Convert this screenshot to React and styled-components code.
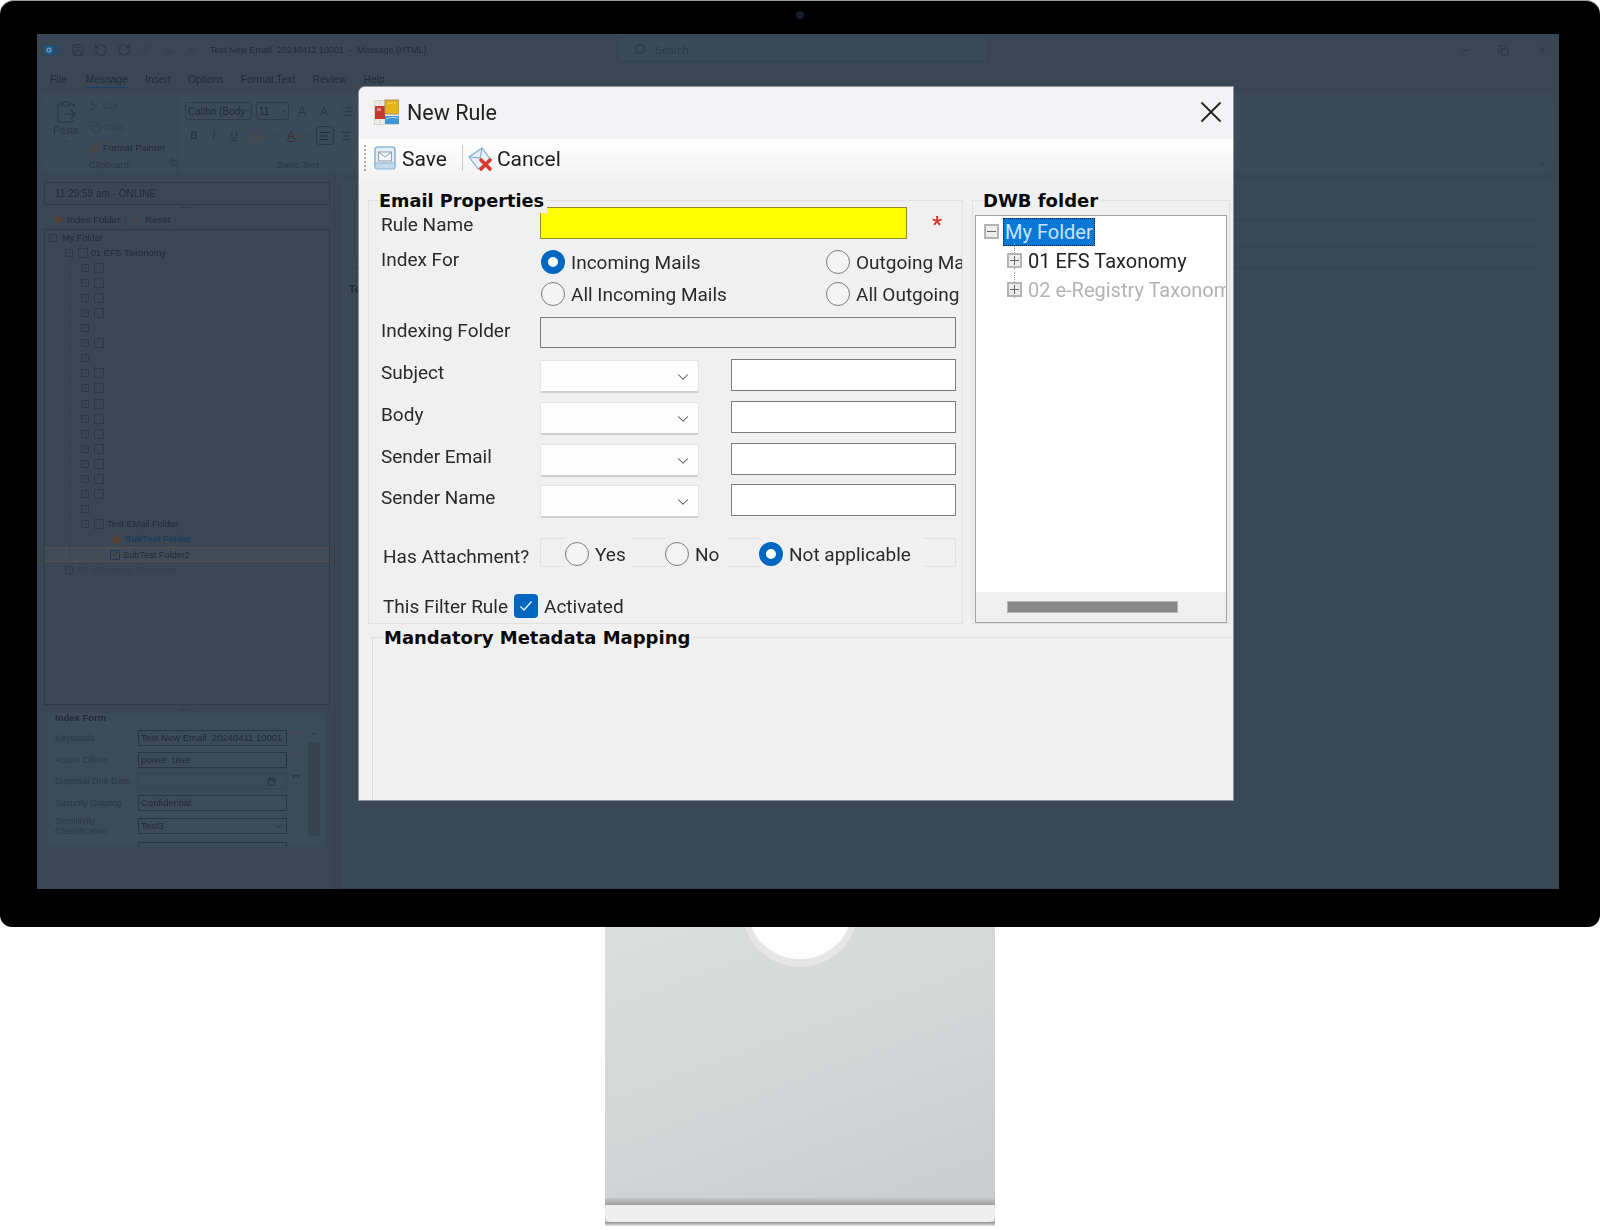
import React from "react";
import styled, { createGlobalStyle } from "styled-components";
import {
  AlignCenter,
  AlignLeft,
  ArrowDown,
  ArrowUp,
  Calendar,
  ChevronDown,
  ChevronUp,
  ClipboardPaste,
  Copy,
  Highlighter,
  List,
  Minus,
  Paintbrush,
  Reply,
  RotateCcw,
  RotateCw,
  Save,
  Scissors,
  Search,
  Star,
  X,
} from "lucide-react";

const GlobalStyle = createGlobalStyle`
  html, body { margin: 0; padding: 0; background: #fff; }
  * { box-sizing: border-box; }
  body { font-family: "Liberation Sans", Arial, sans-serif; }
`;

const DIM = "#202b37";
const DIM_SOFT = "#2a3643";
const DIM_LINE = "#2f3b49";

const Page = styled.div`
  width: 1600px;
  height: 1230px;
  display: flex;
  flex-direction: column;
  align-items: center;
`;

const Monitor = styled.div`
  width: 1600px;
  height: 927px;
  flex: none;
  position: relative;
  z-index: 1;
  background: #000;
  border-radius: 14px 14px 12px 12px;
  border-top: 1px solid #9a9a9a;
  padding: 33px 41px 38px 37px;
  display: flex;
`;

const Camera = styled.span`
  position: absolute;
  left: 796px;
  top: 10px;
  width: 8px;
  height: 8px;
  border-radius: 50%;
  background: #161d2b;
`;

const Screen = styled.div`
  flex: 1;
  position: relative;
  overflow: hidden;
  background: #394755;
`;

const AppLayer = styled.div`
  height: 100%;
  display: flex;
  flex-direction: column;
  color: ${DIM};
  font-size: 10.5px;
  filter: blur(0.3px);
`;

/* title bar of the dimmed mail window */
const TitleRow = styled.div`
  height: 32px;
  flex: none;
  display: grid;
  grid-template-columns: 580px 371px 1fr;
  align-items: center;
`;

const QuickBar = styled.div`
  display: flex;
  align-items: center;
  padding-left: 3px;
`;

const QuickIcon = styled.span`
  width: 23px;
  margin-left: ${(p) => p.$left || 0}px;
  display: flex;
  justify-content: center;
  color: ${(p) => p.$color || DIM_SOFT};
`;

const WindowTitle = styled.span`
  margin-left: 6px;
  white-space: pre;
  font-size: 9px;
`;

const SearchBox = styled.div`
  height: 25px;
  margin-top: -1px;
  border: 1px solid #35424f;
  border-radius: 4px;
  background: #3b4a58;
  display: flex;
  align-items: center;
  gap: 9px;
  padding-left: 15px;
  font-size: 10.5px;
  color: #2c3846;
`;

const WindowControls = styled.div`
  display: flex;
  justify-content: flex-end;
  align-items: center;
  gap: 27px;
  padding-right: 11px;
  color: ${DIM_SOFT};
`;

const TabRow = styled.div`
  height: 27px;
  flex: none;
  display: flex;
  align-items: center;
  gap: 17px;
  padding: 3px 0 0 13px;
  font-size: 10.4px;
`;

const Tab = styled.span`
  padding-bottom: 2px;
  margin-right: ${(p) => p.$after || 0}px;
  border-bottom: 1px solid ${(p) => (p.$active ? "#1d3f66" : "transparent")};
`;

const Ribbon = styled.div`
  height: 79px;
  flex: none;
  margin: 0 6px 0 4px;
  border-radius: 6px;
  background: #3b4a58;
  display: grid;
  grid-template-columns: 137px 1fr 24px;
`;

const RibbonGroup = styled.div`
  display: flex;
  flex-direction: column;
  border-right: ${(p) => (p.$divider ? `1px solid #34414f` : "none")};
`;

const RibbonBody = styled.div`
  flex: 1;
  display: flex;
`;

const RibbonFooter = styled.div`
  height: 17px;
  padding-bottom: 4px;
  padding-left: ${(p) => p.$indent || 0}px;
  display: flex;
  align-items: center;
  justify-content: ${(p) => (p.$indent ? "flex-start" : "center")};
  position: relative;
  font-size: 9.3px;
  color: #2b3744;
`;

const Launcher = styled.span`
  position: absolute;
  right: 0;
  top: 0;
  color: ${DIM_SOFT};
`;

const PasteColumn = styled.div`
  width: 44px;
  margin-left: 3px;
  padding-top: 7px;
  display: flex;
  flex-direction: column;
  align-items: center;
  font-size: 10px;
  gap: 1px;
  color: ${DIM_SOFT};
`;

const ClipStack = styled.div`
  padding: 2px 0 0 1px;
  display: flex;
  flex-direction: column;
  font-size: 9.4px;
`;

const ClipItem = styled.div`
  height: 21px;
  display: flex;
  align-items: center;
  gap: 2px;
  color: ${(p) => (p.$muted ? "#333f4d" : DIM)};
`;

const FontTools = styled.div`
  padding: 9px 0 0 7px;
  display: flex;
  flex-direction: column;
  gap: 6px;
`;

const ToolRow = styled.div`
  display: flex;
  align-items: center;
  height: ${(p) => p.$height || 18}px;
  gap: ${(p) => p.$gap || 4}px;
`;

const MiniSelect = styled.div`
  width: ${(p) => p.$width}px;
  height: 18px;
  border: 1px solid #2f3b49;
  border-radius: 3px;
  padding-left: 2px;
  display: flex;
  align-items: center;
  justify-content: space-between;
  font-size: 10px;
  overflow: hidden;
  white-space: nowrap;
`;

const ToolGlyph = styled.span`
  width: ${(p) => p.$width || 18}px;
  text-align: center;
  font-size: ${(p) => p.$size || 10}px;
  font-weight: ${(p) => p.$weight || 400};
  font-style: ${(p) => (p.$italic ? "italic" : "normal")};
  text-decoration: ${(p) => (p.$under ? "underline" : "none")};
  color: ${(p) => p.$color || DIM_SOFT};
  display: flex;
  justify-content: center;
`;

const AlignBox = styled.span`
  width: 18px;
  height: 19px;
  border: 1px solid #2b3643;
  border-radius: 4px;
  display: flex;
  align-items: center;
  justify-content: center;
  color: ${DIM};
`;

const RibbonCollapse = styled.div`
  display: flex;
  align-items: flex-end;
  justify-content: center;
  padding: 0 0 5px 0;
  color: ${DIM_SOFT};
`;

/* panes under the ribbon */
const Main = styled.div`
  flex: 1;
  display: flex;
  min-height: 0;
`;

const LeftPane = styled.div`
  width: 298px;
  flex: none;
  padding: 10px 4px 0 7px;
  border-right: 1px solid #34414f;
  display: flex;
  flex-direction: column;
`;

const StatusBox = styled.div`
  height: 23px;
  flex: none;
  border: 1px solid ${DIM_LINE};
  padding-left: 10px;
  display: flex;
  align-items: center;
  font-size: 10px;
`;

const Handle = styled.div`
  height: ${(p) => p.$height}px;
  flex: none;
  display: flex;
  justify-content: center;
  align-items: center;
  &::after {
    content: "";
    width: 14px;
    border-top: 1px dotted #2a3643;
  }
`;

const PaneToolbar = styled.div`
  height: 20px;
  flex: none;
  display: flex;
  align-items: center;
  padding-left: 10px;
  font-size: 9.6px;
`;

const PaneTool = styled.span`
  display: flex;
  align-items: center;
  gap: 4px;
  padding-right: 5px;
  margin-right: 4px;
  border-right: 1px solid #34414f;
  color: ${DIM};
`;

const TreeBox = styled.div`
  height: 476px;
  flex: none;
  border: 1px solid ${DIM_LINE};
  font-size: 9.2px;
  overflow: hidden;
`;

const DimRow = styled.div`
  height: 15.1px;
  position: relative;
  display: flex;
  align-items: center;
  gap: 3px;
  padding-left: ${(p) => p.$indent}px;
  color: ${(p) => p.$color || DIM};
  font-weight: ${(p) => (p.$bold ? 700 : 400)};
  white-space: nowrap;
  background: ${(p) => (p.$selected ? "#414d56" : "transparent")};
  border-top: ${(p) => (p.$selected ? "1px dotted #6a5040" : "none")};
  border-bottom: ${(p) => (p.$selected ? "1px dotted #6a5040" : "none")};
`;

const Guide = styled.span`
  position: absolute;
  left: ${(p) => p.$left}px;
  top: 0;
  bottom: 0;
  border-left: 1px dotted #303c4a;
`;

const DimExpander = styled.span`
  width: 8px;
  height: 8px;
  position: relative;
  flex: none;
  margin-right: 2px;
  border: 1px solid #2c3845;
  border-radius: 1px;
  background: #394755;
  display: flex;
  align-items: center;
  justify-content: center;
  font-size: 8px;
  line-height: 1;
  color: #2c3845;
`;

const DimCheck = styled.span`
  width: 10px;
  height: 10px;
  flex: none;
  position: relative;
  border: 1px solid ${(p) => (p.$on ? "#22375a" : "#2c3845")};
  border-radius: 1px;
  display: flex;
  align-items: center;
  justify-content: center;
  font-size: 8px;
`;

const IndexForm = styled.div`
  height: 134px;
  flex: none;
  margin: 0 5px 0 4px;
  background: #3c4b59;
  padding: 0 4px 0 7px;
  display: grid;
  grid-template-columns: 1fr 14px;
  overflow: hidden;
`;

const IndexRows = styled.div`
  display: flex;
  flex-direction: column;
  font-size: 9px;
`;

const IndexTitle = styled.div`
  height: 17px;
  line-height: 10px;
  font-weight: 700;
  font-size: 9.5px;
`;

const IndexRow = styled.div`
  display: grid;
  grid-template-columns: 83px 149px 1fr;
  align-items: center;
  min-height: 16px;
  margin-bottom: 5.5px;
  color: #2c3845;
  line-height: 10px;
`;

const IndexField = styled.div`
  height: 16px;
  border: 1px solid ${(p) => (p.$off ? "#37444f" : "#2a3643")};
  padding: 0 2px;
  display: flex;
  align-items: center;
  justify-content: space-between;
  white-space: pre;
  color: ${DIM};
  font-size: 9.5px;
`;

const IndexMark = styled.span`
  padding-left: 5px;
  margin-top: -4px;
  color: ${(p) => (p.$red ? "#5b4144" : "#222d3a")};
  font-size: 10px;
`;

const IndexScroll = styled.div`
  display: flex;
  flex-direction: column;
  align-items: center;
  justify-content: space-between;
  padding: 16px 0 5px;
  color: ${DIM};
`;

const IndexThumb = styled.div`
  flex: 1;
  align-self: stretch;
  margin: 3px 1px 12px;
  background: #35434f;
`;

const ReadingPane = styled.div`
  flex: 1;
  margin: 6px 6px 0 5px;
  padding: 19px 17px 0 13px;
  background: #3a4957;
  border: 1px solid #37444f;
  border-radius: 6px 6px 0 0;
`;

const InfoBox = styled.div`
  height: 61px;
  border-left: 1px solid #34414f;
  border-radius: 4px;
  margin-bottom: 9px;
`;

const InfoLine = styled.div`
  height: ${(p) => p.$height}px;
  border-bottom: 1px solid #34414f;
`;

const PaneRule = styled.div`
  border-top: 1px solid #34414f;
  padding: 14px 0 0 0;
  margin-left: -5px;
  font-size: 10.5px;
  font-weight: 700;
  color: #1f2a35;
`;

/* the dialog on top */
const Dialog = styled.div`
  position: absolute;
  left: 322px;
  top: 53px;
  width: 874px;
  height: 713px;
  background: #f0f0f0;
  border-radius: 6px 0 0 0;
  box-shadow: 0 0 0 1px #8c939a;
  display: flex;
  flex-direction: column;
  overflow: hidden;
  color: #1d1d1d;
  font-family: Roboto, "Liberation Sans", sans-serif;
`;

const DialogTitle = styled.div`
  height: 52px;
  flex: none;
  background: #f3f3f5;
  display: flex;
  align-items: center;
  padding: 0 4px 2px 15px;
  gap: 8px;
  font-size: 21.5px;
  color: #222;
`;

const CloseButton = styled.span`
  margin-left: auto;
  display: flex;
  color: #222;
`;

const Toolbar = styled.div`
  height: 46px;
  flex: none;
  background: linear-gradient(#ffffff, #f0f0f0);
  display: flex;
  align-items: flex-start;
  padding: 6px 0 0 5px;
  font-size: 21px;
`;

const Grip = styled.span`
  width: 2px;
  height: 26px;
  margin-right: 8px;
  border-left: 2px dotted #a9a9a9;
`;

const ToolButton = styled.span`
  display: flex;
  align-items: center;
  height: 27px;
  gap: ${(p) => p.$gap}px;
`;

const ToolSep = styled.span`
  width: 1px;
  height: 26px;
  margin: 0 5px 0 15px;
  background: #c9c9c9;
`;

const UpperRow = styled.div`
  height: 424px;
  flex: none;
  margin: 15px 0 0 9px;
  display: grid;
  grid-template-columns: 595px 258px;
  column-gap: 9px;
`;

const Group = styled.div`
  position: relative;
  border: 1px solid #e1e1e1;
  padding: ${(p) => p.$pad};
  display: flex;
  flex-direction: column;
`;

const GroupTitle = styled.span`
  position: absolute;
  left: ${(p) => p.$left}px;
  top: -12px;
  padding: 0 3px 0 0;
  line-height: 24px;
  font-family: "DejaVu Sans", sans-serif;
  font-size: ${(p) => p.$size || 18}px;
  font-weight: 700;
  color: #0a0a0a;
  background: #f0f0f0;
  white-space: nowrap;
  z-index: 1;
`;

const FormRow = styled.div`
  height: ${(p) => p.$height}px;
  flex: none;
  margin-top: ${(p) => p.$top}px;
  display: grid;
  grid-template-columns: 159px 1fr;
  position: relative;
`;

const FieldLabel = styled.span`
  font-size: 19px;
  line-height: 24px;
  margin-top: ${(p) => p.$top}px;
  margin-left: ${(p) => p.$indent || 0}px;
  white-space: nowrap;
  color: #2a2a2a;
`;

const RuleField = styled.div`
  display: flex;
  align-items: flex-start;
  gap: 25px;
`;

const YellowInput = styled.div`
  width: 367px;
  height: 32px;
  background: #ffff00;
  border: 1.5px solid #8d8d2c;
`;

const Required = styled.span`
  color: #d8352a;
  font-size: 22px;
  line-height: 36px;
  font-weight: 700;
`;

const RadioGrid = styled.div`
  display: grid;
  grid-template-columns: 285px 1fr;
  grid-auto-rows: 32px;
  overflow: hidden;
  padding-left: 1px;
  font-size: 19px;
`;

const RadioItem = styled.label`
  display: flex;
  align-items: center;
  gap: ${(p) => p.$gap || 6}px;
  white-space: nowrap;
  color: #2a2a2a;
`;

const RadioDot = styled.span`
  width: 24px;
  height: 24px;
  flex: none;
  border-radius: 50%;
  background: ${(p) => (p.$on ? "#fff" : "#f4f4f4")};
  border: ${(p) => (p.$on ? "7px solid #0067c0" : "1.5px solid #7b7b7b")};
`;

const SunkenField = styled.div`
  height: 100%;
  width: 416px;
  background: #f0f0f0;
  border: 1.5px solid #7c7c7c;
`;

const PairField = styled.div`
  display: flex;
  gap: 32px;
  align-items: flex-start;
`;

const Combo = styled.div`
  width: 159px;
  height: 33px;
  flex: none;
  background: #fdfdfd;
  border: 1px solid #e4e4e4;
  border-bottom: 2px solid #cfcfcf;
  border-radius: 2px;
  display: flex;
  align-items: center;
  justify-content: flex-end;
  padding: 2px 6px 0 0;
  color: #555;
`;

const PairInput = styled.div`
  width: 225px;
  height: 32px;
  background: #fff;
  border: 1.5px solid #7c7c7c;
  margin-top: -1px;
`;

const AttachGroup = styled.div`
  width: 416px;
  height: 29px;
  border: 1px solid #e1e1e1;
  display: flex;
  align-items: stretch;
  font-size: 19px;
`;

const AttachOption = styled.div`
  width: ${(p) => p.$width}px;
  margin: -1px 0 -1px ${(p) => p.$left}px;
  padding-top: 3px;
  background: #f0f0f0;
  display: flex;
  align-items: center;
`;

const FilterRow = styled.div`
  margin: 27px 0 0 2px;
  height: 24px;
  display: flex;
  align-items: center;
  font-size: 19px;
  color: #2a2a2a;
  white-space: nowrap;
`;

const CheckBox = styled.span`
  width: 24px;
  height: 24px;
  margin: 0 6px 0 6px;
  flex: none;
  border-radius: 4px;
  background: #0067c0;
  display: flex;
  align-items: center;
  justify-content: center;
`;

const FolderPanel = styled.div`
  flex: 1;
  background: #fff;
  border: 1.5px solid #a2a2a2;
  padding-top: 1px;
  display: flex;
  flex-direction: column;
  overflow: hidden;
  min-height: 0;
`;

const FolderRow = styled.div`
  height: 29px;
  flex: none;
  position: relative;
  display: flex;
  align-items: center;
  gap: ${(p) => (p.$level ? 6 : 4)}px;
  padding-left: ${(p) => (p.$level ? 31 : 8)}px;
  font-size: 20px;
  white-space: nowrap;
  color: ${(p) => (p.$muted ? "#b3b3b3" : "#222")};
`;

const FolderExpander = styled.span`
  width: 15px;
  height: 15px;
  flex: none;
  position: relative;
  background: #ededed;
  border: 2px solid #b4b4b4;
  &::before {
    content: "";
    position: absolute;
    left: 1px;
    right: 1px;
    top: 4.5px;
    border-top: 1px solid #666;
  }
  &::after {
    content: "";
    display: ${(p) => (p.$open ? "none" : "block")};
    position: absolute;
    top: 1px;
    bottom: 1px;
    left: 4.5px;
    border-left: 1px solid #666;
  }
`;

const SelectedName = styled.span`
  height: 28px;
  padding: 0 2px;
  display: flex;
  align-items: center;
  background: #0a78d7;
  color: #c4e4ff;
  outline: 1px dotted #123;
  outline-offset: -1px;
`;

const FolderLine = styled.span`
  position: absolute;
  left: 38px;
  top: -3px;
  bottom: 6px;
  border-left: 1px dotted #9a9a9a;
`;

const ScrollStrip = styled.div`
  height: 30px;
  flex: none;
  margin-top: auto;
  background: #f0f0f0;
  padding: 9px 0 9px 31px;
`;

const ScrollThumb = styled.div`
  width: 171px;
  height: 12px;
  background: #878787;
  border: 1px solid #b5b5b5;
`;

const MappingGroup = styled.div`
  flex: 1;
  position: relative;
  margin: 13px 0 0 13px;
  border-top: 1px solid #e1e1e1;
  border-left: 1px solid #dcdcdc;
`;

/* monitor stand */
const Stand = styled.div`
  width: 390px;
  height: 299px;
  flex: none;
  position: relative;
  overflow: hidden;
  display: flex;
  flex-direction: column;
  background: linear-gradient(160deg, #dcdddd 0%, #d3d4d5 55%, #c9cacb 100%);
`;

const StandCutout = styled.span`
  position: absolute;
  left: 137px;
  top: -76px;
  width: 116px;
  height: 116px;
  border-radius: 50%;
  background: #fff;
  border: 6px solid #e6e6e6;
  border-bottom-width: 8px;
`;

const StandFace = styled.div`
  flex: 1;
`;

const StandCrease = styled.div`
  height: 7px;
  background: linear-gradient(#c4c5c6, #9d9e9f);
`;

const StandFoot = styled.div`
  height: 17px;
  background: #eeeeee;
  border-radius: 0 0 6px 6px;
`;

const StandEdge = styled.div`
  height: 4px;
  background: linear-gradient(#8c8c8c, #e6e6e6);
`;

const TitleGlyph = () => (
  <svg width="25" height="26" viewBox="0 0 25 26">
    <rect x="0.5" y="1.5" width="24" height="24" fill="#ecebe6" stroke="#d5d5d0" />
    <path d="M1 9.5H11M1 19.5H11M6 1V25M11 1V25" stroke="#d2d2cc" fill="none" />
    <rect x="1" y="7" width="10" height="13" fill="#c5392e" />
    <rect x="3" y="9" width="4" height="3" fill="#e08f87" />
    <rect x="11" y="1" width="14" height="14" fill="#e5b516" stroke="#a9956a" />
    <path d="M14 5l2-2M17 5l2-2M20 5l2-2" stroke="#f7e77e" />
    <rect x="11" y="17" width="14" height="8" fill="#3f94d6" />
    <path d="M12 20c4-2 8-2 12-1" stroke="#a5d3f1" fill="none" />
  </svg>
);

const SaveGlyph = () => (
  <svg width="22" height="25" viewBox="0 0 22 25">
    <rect x="1" y="1" width="20" height="20" rx="3" fill="#e3edf5" stroke="#8db6d5" strokeWidth="1.6" />
    <rect x="1" y="17" width="20" height="6" rx="2" fill="#c3d9ea" stroke="#8db6d5" strokeWidth="1.2" />
    <rect x="4.5" y="6" width="13" height="9" fill="#f4f6f8" stroke="#8f9faa" />
    <path d="M4.5 6l6.5 5 6.5-5" stroke="#8f9faa" fill="none" />
  </svg>
);

const CancelGlyph = () => (
  <svg width="26" height="26" viewBox="0 0 26 26">
    <path d="M1 11L14 2l9 12-13 9z" fill="#e6f0f8" stroke="#7fa9c9" strokeWidth="1.2" />
    <path d="M1 11l11 1 2-10" stroke="#7fa9c9" fill="none" />
    <path d="M13 14l9 9M22 14l-9 9" stroke="#d83a2e" strokeWidth="3.6" strokeLinecap="round" />
  </svg>
);

const OutlookGlyph = () => (
  <svg width="14" height="14" viewBox="0 0 14 14">
    <rect x="3" y="1" width="11" height="12" rx="1" fill="#2a4a63" />
    <rect x="0" y="3" width="8" height="8" rx="1" fill="#1d5e8c" />
    <circle cx="4" cy="7" r="2" fill="none" stroke="#8fb0c8" />
  </svg>
);

const dimRows = [
  { check: true }, { check: true }, { check: true }, { check: true }, {},
  { check: true }, {}, { check: true }, { check: true }, { check: true },
  { check: true }, { check: true }, { check: true }, { check: true },
  { check: true }, { check: true }, {},
];

const indexRows = [
  { label: "Keywords", value: "Test New Email  20240411 10001", mark: "*", red: true },
  { label: "Action Officer", value: "power  user", mark: "*", red: true },
  { label: "Disposal Due Date", off: true, mark: "**" },
  { label: "Security Grading", value: "Confidential" },
  { label: "Sensitivity Classification", value: "Test3", select: true },
];

const pairRows = [
  { label: "Subject", top: 12 },
  { label: "Body", top: 9 },
  { label: "Sender Email", top: 9 },
  { label: "Sender Name", top: 8 },
];

const Background = () => (
  <AppLayer>
    <TitleRow>
      <QuickBar>
        <QuickIcon><OutlookGlyph /></QuickIcon>
        <QuickIcon $left={3}><Save size={14} /></QuickIcon>
        <QuickIcon><RotateCcw size={14} /></QuickIcon>
        <QuickIcon><RotateCw size={14} /></QuickIcon>
        <QuickIcon $color="#33404e"><ArrowUp size={13} /></QuickIcon>
        <QuickIcon $color="#33404e"><ArrowDown size={13} /></QuickIcon>
        <QuickIcon><ChevronDown size={11} /></QuickIcon>
        <WindowTitle>Test New Email  20240411 10001  -  Message (HTML)</WindowTitle>
      </QuickBar>
      <SearchBox>
        <Search size={13} style={{ transform: "scaleX(-1)" }} />
        Search
      </SearchBox>
      <WindowControls>
        <Minus size={11} />
        <Copy size={11} />
        <X size={12} />
      </WindowControls>
    </TitleRow>

    <TabRow>
      <Tab $after={2}>File</Tab>
      <Tab $active>Message</Tab>
      <Tab>Insert</Tab>
      <Tab>Options</Tab>
      <Tab>Format Text</Tab>
      <Tab>Review</Tab>
      <Tab>Help</Tab>
    </TabRow>

    <Ribbon>
      <RibbonGroup $divider>
        <RibbonBody>
          <PasteColumn>
            <ClipboardPaste size={24} strokeWidth={1.2} />
            Paste
            <ChevronDown size={9} />
          </PasteColumn>
          <ClipStack>
            <ClipItem $muted><Scissors size={12} /> Cut</ClipItem>
            <ClipItem $muted><Copy size={12} /> Copy</ClipItem>
            <ClipItem><Paintbrush size={12} color="#5a4438" /> Format Painter</ClipItem>
          </ClipStack>
        </RibbonBody>
        <RibbonFooter>
          Clipboard
          <Launcher><Copy size={8} /></Launcher>
        </RibbonFooter>
      </RibbonGroup>
      <RibbonGroup>
        <RibbonBody>
          <FontTools>
            <ToolRow>
              <MiniSelect $width={67}>Calibri (Body <ChevronDown size={8} /></MiniSelect>
              <MiniSelect $width={33}>11 <ChevronDown size={8} /></MiniSelect>
              <ToolGlyph $size={13} $width={18}>A</ToolGlyph>
              <ToolGlyph $size={11} $width={18}>A</ToolGlyph>
              <ToolGlyph $width={20}><List size={13} /></ToolGlyph>
            </ToolRow>
            <ToolRow $height={19} $gap={2}>
              <ToolGlyph $weight={700}>B</ToolGlyph>
              <ToolGlyph $italic>I</ToolGlyph>
              <ToolGlyph $under>U</ToolGlyph>
              <ToolGlyph $width={23} $color="#4a4a4a"><Highlighter size={13} /></ToolGlyph>
              <ToolGlyph $width={10}><ChevronDown size={8} /></ToolGlyph>
              <ToolGlyph $size={12} $under $color="#3a2f33">A</ToolGlyph>
              <ToolGlyph $width={12}><ChevronDown size={8} /></ToolGlyph>
              <AlignBox><AlignLeft size={12} /></AlignBox>
              <ToolGlyph $width={20}><AlignCenter size={12} /></ToolGlyph>
            </ToolRow>
          </FontTools>
        </RibbonBody>
        <RibbonFooter $indent={99}>Basic Text</RibbonFooter>
      </RibbonGroup>
      <RibbonCollapse><ChevronDown size={12} /></RibbonCollapse>
    </Ribbon>

    <Main>
      <LeftPane>
        <StatusBox>11:29:59 am - ONLINE</StatusBox>
        <Handle $height={4} />
        <PaneToolbar>
          <PaneTool><Star size={9} fill="#5b4034" color="#5b4034" /> Index Folder</PaneTool>
          <PaneTool><Reply size={11} color="#5b4034" /> Reset</PaneTool>
        </PaneToolbar>
        <TreeBox>
          <DimRow $indent={4}><DimExpander>−</DimExpander> My Folder</DimRow>
          <DimRow $indent={20}><DimExpander>−</DimExpander><DimCheck /> 01 EFS Taxonomy</DimRow>
          {dimRows.map((row, i) => (
            <DimRow key={i} $indent={36}>
              <Guide $left={24} />
              <DimExpander>+</DimExpander>
              {row.check && <DimCheck />}
            </DimRow>
          ))}
          <DimRow $indent={36}>
            <Guide $left={24} />
            <DimExpander>−</DimExpander><DimCheck /> Test EMail Folder
          </DimRow>
          <DimRow $indent={66} $bold $color="#1e3a5c">
            <Guide $left={24} />
            <Star size={11} fill="#5b4034" color="#5b4034" /> SubTest Folder
          </DimRow>
          <DimRow $indent={65} $selected>
            <Guide $left={24} />
            <DimCheck $on>✓</DimCheck> SubTest Folder2
          </DimRow>
          <DimRow $indent={20} $color="#33404e">
            <DimExpander>+</DimExpander> 02 e-Registry Taxonomy
          </DimRow>
        </TreeBox>
        <Handle $height={8} />
        <IndexForm>
          <IndexRows>
            <IndexTitle>Index Form</IndexTitle>
            {indexRows.map((row) => (
              <IndexRow key={row.label}>
                <span>{row.label}</span>
                <IndexField $off={row.off}>
                  {row.value}
                  {row.select && <ChevronDown size={9} />}
                  {row.off && <Calendar size={9} style={{ marginLeft: "auto", marginRight: 8 }} />}
                </IndexField>
                {row.mark && <IndexMark $red={row.red}>{row.mark}</IndexMark>}
              </IndexRow>
            ))}
            <IndexRow><span /><IndexField /></IndexRow>
          </IndexRows>
          <IndexScroll>
            <ChevronUp size={10} />
            <IndexThumb />
            <ChevronDown size={10} />
          </IndexScroll>
        </IndexForm>
      </LeftPane>
      <ReadingPane>
        <InfoBox>
          <InfoLine $height={23} />
          <InfoLine $height={26} />
        </InfoBox>
        <PaneRule>Te</PaneRule>
      </ReadingPane>
    </Main>
  </AppLayer>
);

const NewRuleDialog = () => (
  <Dialog>
    <DialogTitle>
      <TitleGlyph />
      New Rule
      <CloseButton><X size={36} strokeWidth={1.2} /></CloseButton>
    </DialogTitle>

    <Toolbar>
      <Grip />
      <ToolButton $gap={6}><SaveGlyph /> Save</ToolButton>
      <ToolSep />
      <ToolButton $gap={3}><CancelGlyph /> Cancel</ToolButton>
    </Toolbar>

    <UpperRow>
      <Group $pad="6px 0 0 12px">
        <GroupTitle $left={10} $size={17.7}>Email Properties</GroupTitle>

        <FormRow $height={32} $top={0}>
          <FieldLabel $top={6}>Rule Name</FieldLabel>
          <RuleField>
            <YellowInput />
            <Required>*</Required>
          </RuleField>
        </FormRow>

        <FormRow $height={56} $top={11}>
          <FieldLabel $top={-2}>Index For</FieldLabel>
          <RadioGrid style={{ marginTop: -4 }}>
            <RadioItem><RadioDot $on /> Incoming Mails</RadioItem>
            <RadioItem><RadioDot /> Outgoing Mails</RadioItem>
            <RadioItem><RadioDot /> All Incoming Mails</RadioItem>
            <RadioItem><RadioDot /> All Outgoing Mails</RadioItem>
          </RadioGrid>
        </FormRow>

        <FormRow $height={31} $top={11}>
          <FieldLabel $top={2}>Indexing Folder</FieldLabel>
          <SunkenField />
        </FormRow>

        {pairRows.map((row) => (
          <FormRow key={row.label} $height={33} $top={row.top}>
            <FieldLabel $top={1}>{row.label}</FieldLabel>
            <PairField>
              <Combo><ChevronDown size={18} strokeWidth={1.4} /></Combo>
              <PairInput />
            </PairField>
          </FormRow>
        ))}

        <FormRow $height={29} $top={20}>
          <FieldLabel $top={7} $indent={2}>Has Attachment?</FieldLabel>
          <AttachGroup>
            <AttachOption $left={24} $width={68}><RadioItem><RadioDot /> Yes</RadioItem></AttachOption>
            <AttachOption $left={32} $width={62}><RadioItem><RadioDot /> No</RadioItem></AttachOption>
            <AttachOption $left={32} $width={165}><RadioItem><RadioDot $on /> Not applicable</RadioItem></AttachOption>
          </AttachGroup>
        </FormRow>

        <FilterRow>
          This Filter Rule
          <CheckBox>
            <svg width="14" height="12" viewBox="0 0 14 12">
              <path d="M1.5 6.5l3.5 3.5 7.5-8.5" stroke="#e8f2fb" strokeWidth="1.4" fill="none" />
            </svg>
          </CheckBox>
          Activated
        </FilterRow>
      </Group>

      <Group $pad="14px 2px 0 2px">
        <GroupTitle $left={10}>DWB folder</GroupTitle>
        <FolderPanel>
          <FolderRow>
            <FolderExpander $open />
            <SelectedName>My Folder</SelectedName>
          </FolderRow>
          <FolderRow $level={1}>
            <FolderLine />
            <FolderExpander /> 01 EFS Taxonomy
          </FolderRow>
          <FolderRow $level={1} $muted>
            <FolderLine />
            <FolderExpander /> 02 e-Registry Taxonomy
          </FolderRow>
          <ScrollStrip><ScrollThumb /></ScrollStrip>
        </FolderPanel>
      </Group>
    </UpperRow>

    <MappingGroup>
      <GroupTitle $left={11}>Mandatory Metadata Mapping</GroupTitle>
    </MappingGroup>
  </Dialog>
);

export default function App() {
  return (
    <Page>
      <GlobalStyle />
      <Monitor>
        <Camera />
        <Screen>
          <Background />
          <NewRuleDialog />
        </Screen>
      </Monitor>
      <Stand>
        <StandCutout />
        <StandFace />
        <StandCrease />
        <StandFoot />
        <StandEdge />
      </Stand>
    </Page>
  );
}
